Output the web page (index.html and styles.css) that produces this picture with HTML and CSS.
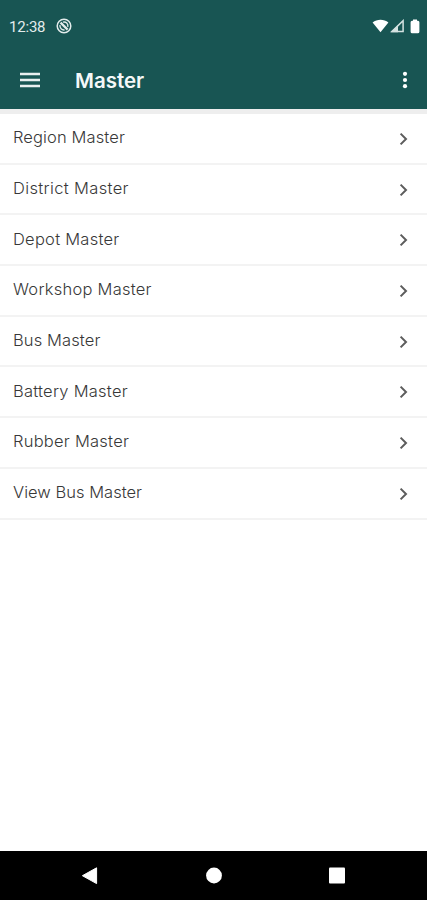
FILE: index.html
```html
<!DOCTYPE html>
<html lang="en">
  <head>
    <meta charset="UTF-8" />
    <meta name="viewport" content="width=device-width, initial-scale=1.0" />
    <title>Master</title>
    <link rel="stylesheet" href="styles.css">
  </head>
  <body>
    <header class="header">
      <div class="status-bar">
        <span class="time">12:38</span>
        <svg class="status-app" width="16" height="16" viewBox="0 0 16 16">
          <circle cx="8" cy="8" r="6.8" fill="none" stroke="#e3ecec" stroke-width="1.5" />
          <path d="M4.6 4.6l7 7" fill="none" stroke="#e3ecec" stroke-width="2.2" />
          <path d="M7 4.1c3-.6 5.4 1.6 4.8 4.7M4 7.2c-.4 3 1.8 5 4.6 4.7" fill="none" stroke="#e3ecec" stroke-width="1.4" />
        </svg>
        <div class="status-icons">
          <svg width="17" height="14" viewBox="0 0 17 14">
            <path d="M.6 3.4C5-.2 12-.2 16.4 3.4L8.5 13.2z" fill="#fff" />
          </svg>
          <svg width="15" height="14" viewBox="0 0 15 14">
            <path d="M1.8 12.6L13.1 1.7v10.9z" fill="none" stroke="#d5e2e1" stroke-width="1.5" />
            <path d="M1 13.2L8 6.2v7z" fill="#d5e2e1" />
          </svg>
          <svg width="10" height="15" viewBox="0 0 10 15">
            <path d="M3 .5h4v1.2h1q1.4.2 1.4 1.6v9.4q0 1.6-1.6 1.6H2.2q-1.6 0-1.6-1.6V3.3q0-1.4 1.4-1.6h1z" fill="#fff" />
          </svg>
        </div>
      </div>
      <div class="toolbar">
        <svg class="menu-icon" width="20" height="16" viewBox="0 0 20 16">
          <path d="M0 2h20M0 8h20M0 14h20" stroke="#e9efef" stroke-width="2.4" />
        </svg>
        <h1>Master</h1>
        <svg class="more-icon" width="6" height="18" viewBox="0 0 6 18">
          <circle cx="3" cy="2.8" r="2.1" fill="#fff" />
          <circle cx="3" cy="9" r="2.1" fill="#fff" />
          <circle cx="3" cy="15.2" r="2.1" fill="#fff" />
        </svg>
      </div>
    </header>

    <ul class="master-list">
      <li>
        <span class="region">Region Master</span>
        <svg class="chevron" viewBox="0 0 10 14"><path d="M1.6 1.6L7 7l-5.4 5.4" /></svg>
      </li>
      <li>
        <span class="district">District Master</span>
        <svg class="chevron" viewBox="0 0 10 14"><path d="M1.6 1.6L7 7l-5.4 5.4" /></svg>
      </li>
      <li>
        <span class="depot">Depot Master</span>
        <svg class="chevron" viewBox="0 0 10 14"><path d="M1.6 1.6L7 7l-5.4 5.4" /></svg>
      </li>
      <li>
        <span class="workshop">Workshop Master</span>
        <svg class="chevron" viewBox="0 0 10 14"><path d="M1.6 1.6L7 7l-5.4 5.4" /></svg>
      </li>
      <li>
        <span class="bus">Bus Master</span>
        <svg class="chevron" viewBox="0 0 10 14"><path d="M1.6 1.6L7 7l-5.4 5.4" /></svg>
      </li>
      <li>
        <span class="battery">Battery Master</span>
        <svg class="chevron" viewBox="0 0 10 14"><path d="M1.6 1.6L7 7l-5.4 5.4" /></svg>
      </li>
      <li>
        <span class="rubber">Rubber Master</span>
        <svg class="chevron" viewBox="0 0 10 14"><path d="M1.6 1.6L7 7l-5.4 5.4" /></svg>
      </li>
      <li>
        <span class="view-bus">View Bus Master</span>
        <svg class="chevron" viewBox="0 0 10 14"><path d="M1.6 1.6L7 7l-5.4 5.4" /></svg>
      </li>
    </ul>

    <nav class="nav-bar">
      <svg width="18" height="18" viewBox="0 0 18 18">
        <path d="M1.4 8.7L15.6.8v15.8z" fill="#fff" stroke="#fff" stroke-linejoin="round" />
      </svg>
      <svg width="18" height="18" viewBox="0 0 18 18">
        <circle cx="9" cy="8.5" r="7.9" fill="#fff" />
      </svg>
      <svg width="18" height="18" viewBox="0 0 18 18">
        <rect x="1" y="0.5" width="16" height="16" rx="1" fill="#fff" />
      </svg>
    </nav>
  </body>
</html>
```
FILE: styles.css
```css
* {
  box-sizing: border-box;
}

body {
  display: flex;
  flex-direction: column;
  height: 900px;
  margin: 0;
  background-color: #ffffff;
  font-family: Inter, sans-serif;
  overflow: hidden;
}

svg {
  display: block;
  flex: none;
}

.header {
  height: 109px;
  background-color: #185553;
}

.status-bar {
  display: flex;
  align-items: center;
  height: 52px;
  padding: 0 7px 0 9px;
}

.time {
  width: 47px;
  padding-top: 1px;
  color: #e3ecec;
  font-family: Roboto, sans-serif;
  font-size: 15px;
  letter-spacing: -0.2px;
}

.status-icons {
  display: flex;
  align-items: center;
  gap: 1px;
  margin-left: auto;
}

.status-icons svg:last-child {
  margin-left: 4px;
}

.toolbar {
  display: flex;
  align-items: center;
  height: 56px;
  padding: 0 19px 0 20px;
}

.toolbar h1 {
  margin: 0 0 0 35px;
  padding-top: 1px;
  color: #f5f8f8;
  font-size: 20.5px;
  font-weight: 600;
}

.more-icon {
  margin-left: auto;
}

.master-list {
  flex: 1;
  margin: 0;
  padding: 0;
  border-top: 5px solid #eeeeee;
  list-style: none;
}

.master-list li {
  display: flex;
  align-items: center;
  justify-content: space-between;
  height: 50.7px;
  padding: 0 18px 0 13px;
  border-bottom: 2px solid #f3f3f3;
  color: #383838;
  font-size: 16.5px;
  font-weight: 300;
}

.master-list span {
  padding-bottom: 2px;
  letter-spacing: 0.25px;
}

.master-list .region,
.master-list .bus {
  letter-spacing: 0.12px;
}

.master-list .district {
  letter-spacing: 0.35px;
}

.master-list .view-bus {
  letter-spacing: 0.03px;
}

.chevron {
  width: 10px;
  height: 14px;
  margin-top: 1px;
  fill: none;
  stroke: #5c5c5c;
  stroke-width: 2;
}

.nav-bar {
  display: flex;
  align-items: center;
  justify-content: space-between;
  height: 49px;
  padding: 0 81px;
  background-color: #000000;
}
```
